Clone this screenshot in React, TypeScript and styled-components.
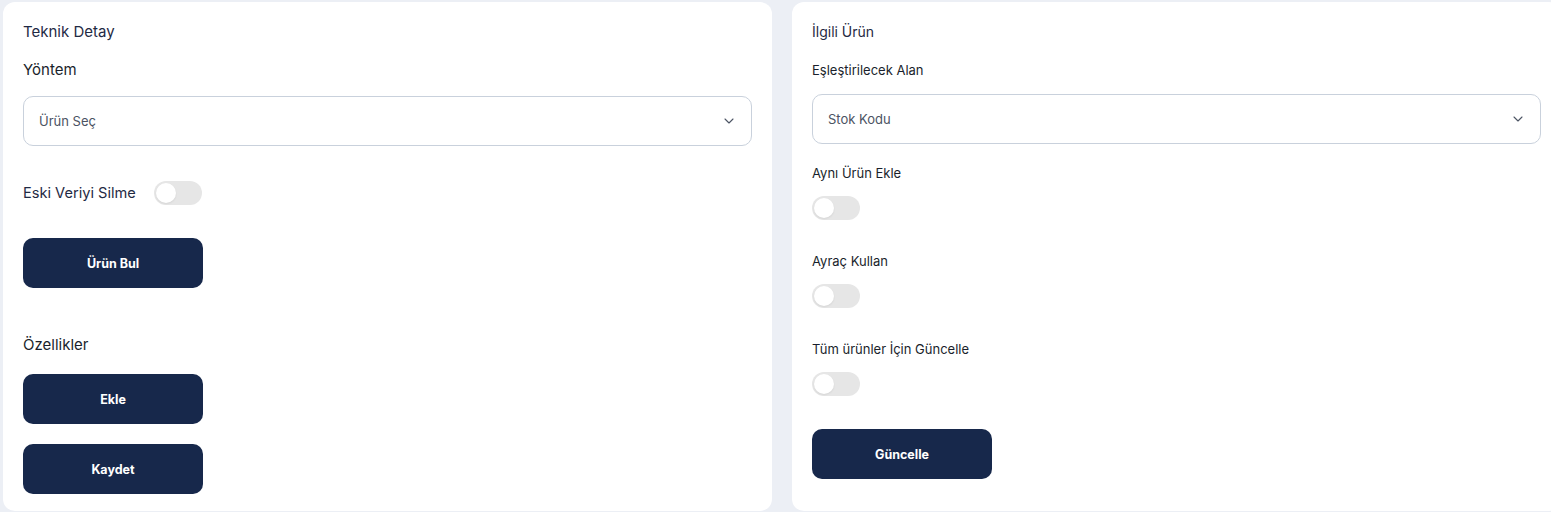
import React from "react";
import styled, { createGlobalStyle } from "styled-components";

const GlobalStyle = createGlobalStyle`
  html, body {
    margin: 0;
    padding: 0;
    background: #eceff5;
    font-family: Inter, "Noto Sans", sans-serif;
    color: #1f2a44;
  }
  * { box-sizing: border-box; }
`;

const Page = styled.div`
  display: grid;
  grid-template-columns: 769px 769px;
  gap: 20px;
  padding: 2px 0 1px 3px;
  width: 1551px;
  height: 512px;
  overflow: hidden;
`;

const Panel = styled.section`
  background: #fff;
  border-radius: 12px;
  padding: 20px 20px 17px;
  display: flex;
  flex-direction: column;
`;

const Title = styled.h2<{ $size?: number }>`
  margin: 0;
  font-size: ${(p) => p.$size ?? 15}px;
  line-height: 20px;
  font-weight: 400;
  color: #1f2a44;
`;

const Label = styled.div<{ $size?: number; $mt: number }>`
  margin-top: ${(p) => p.$mt}px;
  font-size: ${(p) => p.$size ?? 14}px;
  line-height: 20px;
  color: #1a1f2c;
`;

const Select = styled.div<{ $mt: number }>`
  margin-top: ${(p) => p.$mt}px;
  height: 50px;
  border: 1px solid #c9d1dc;
  border-radius: 10px;
  display: flex;
  align-items: center;
  justify-content: space-between;
  padding: 0 14px 0 15px;
  font-size: 13px;
  color: #4b5363;
`;

const InlineRow = styled.div<{ $mt: number }>`
  margin-top: ${(p) => p.$mt}px;
  display: flex;
  align-items: center;
  gap: 18px;
  font-size: 14.6px;
  color: #1f2a44;
`;

const Toggle = styled.span<{ $mt?: number }>`
  margin-top: ${(p) => p.$mt ?? 0}px;
  display: inline-flex;
  align-items: center;
  width: 48px;
  height: 24px;
  border-radius: 12px;
  background: #e6e6e6;
  padding: 2px;
  &::before {
    content: "";
    width: 20px;
    height: 20px;
    border-radius: 50%;
    background: #fff;
    box-shadow: 0 1px 2px rgba(0, 0, 0, 0.08);
  }
`;

const Button = styled.button<{ $mt: number }>`
  margin-top: ${(p) => p.$mt}px;
  width: 180px;
  height: 50px;
  border: none;
  border-radius: 10px;
  background: #17284b;
  color: #fff;
  font-family: inherit;
  font-size: 12.5px;
  font-weight: 700;
  cursor: pointer;
`;

const Chevron = () => (
  <svg width="16" height="16" viewBox="0 0 24 24" fill="none" stroke="#4b5363" strokeWidth="1.6" strokeLinecap="round" strokeLinejoin="round">
    <path d="M6 9l6 6 6-6" />
  </svg>
);

export default function App() {
  return (
    <>
      <GlobalStyle />
      <Page>
        <Panel>
          <Title>Teknik Detay</Title>
          <Label $mt={18} $size={15}>Yöntem</Label>
          <Select $mt={16}>
            <span>Ürün Seç</span>
            <Chevron />
          </Select>
          <InlineRow $mt={35}>
            <span>Eski Veriyi Silme</span>
            <Toggle />
          </InlineRow>
          <Button $mt={33}>Ürün Bul</Button>
          <Label $mt={47} $size={15}>Özellikler</Label>
          <Button $mt={19}>Ekle</Button>
          <Button $mt={20}>Kaydet</Button>
        </Panel>
        <Panel>
          <Title $size={14}>İlgili Ürün</Title>
          <Label $mt={18} $size={13}>Eşleştirilecek Alan</Label>
          <Select $mt={14}>
            <span>Stok Kodu</span>
            <Chevron />
          </Select>
          <Label $mt={19} $size={13}>Aynı Ürün Ekle</Label>
          <Toggle $mt={13} />
          <Label $mt={31} $size={13}>Ayraç Kullan</Label>
          <Toggle $mt={13} />
          <Label $mt={31} $size={13}>Tüm ürünler İçin Güncelle</Label>
          <Toggle $mt={13} />
          <Button $mt={33}>Güncelle</Button>
        </Panel>
      </Page>
    </>
  );
}
